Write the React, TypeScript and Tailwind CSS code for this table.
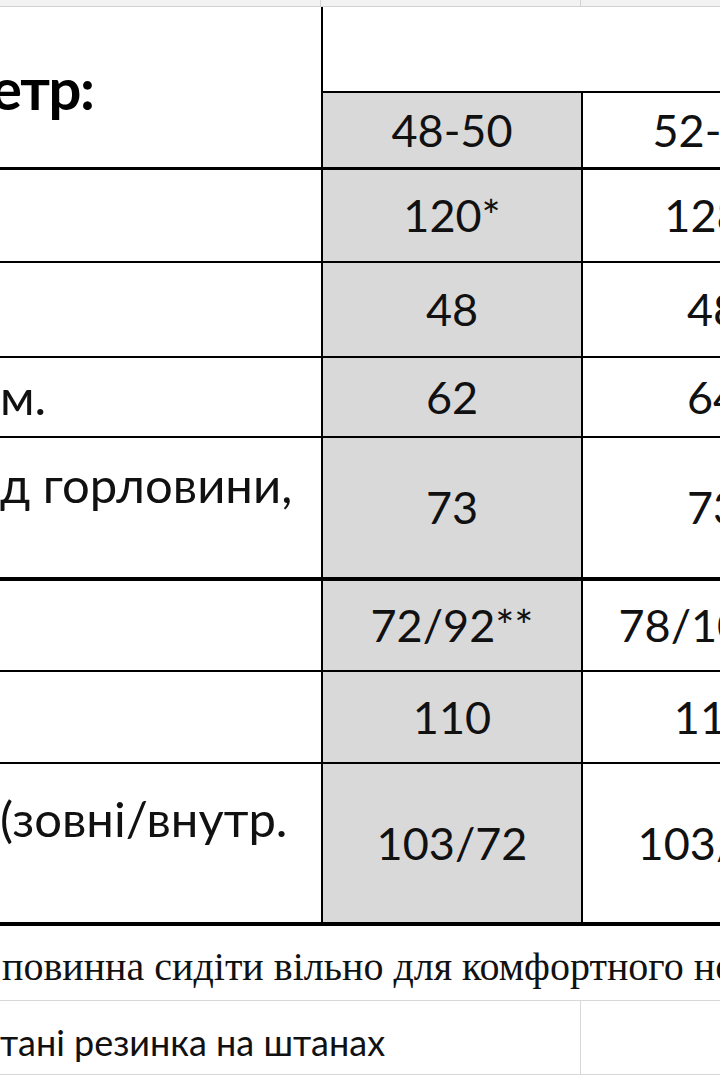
const calibri = "font-['Lato','Open_Sans',sans-serif]";

type Row = {
  label?: string;
  a: string;
  b: string;
  height: string;
  border: string;
  labelTop?: string;
};

const rows: Row[] = [
  { a: "120*", b: "128*", height: "h-[91px]", border: "border-b-2" },
  { a: "48", b: "48", height: "h-[93px]", border: "border-b-2" },
  { label: "м.", a: "62", b: "64", height: "h-[78px]", border: "border-b-2", labelTop: "pt-[10px]" },
  { label: "д горловини,", a: "73", b: "73", height: "h-[139px]", border: "border-b-4", labelTop: "pt-[18px]" },
  { a: "72/92**", b: "78/100**", height: "h-[89px]", border: "border-b-2" },
  { a: "110", b: "116", height: "h-[90px]", border: "border-b-2" },
  { label: "(зовні/внутр.", a: "103/72", b: "103/72", height: "h-[158px]", border: "border-b-4", labelTop: "pt-[26px]" },
];

function DataRow({ row }: { row: Row }) {
  return (
    <div className={`flex ${row.height} box-content border-black ${row.border}`}>
      <div
        className={`flex w-[321px] shrink-0 ${row.labelTop ? "items-start " + row.labelTop : "items-center"} border-r-2 border-black box-content`}
      >
        <span className="whitespace-nowrap text-[49px] leading-[56px] text-[#111]">{row.label}</span>
      </div>
      <div className="flex w-[258px] shrink-0 items-center justify-center bg-[#d9d9d9] border-r-2 border-black box-content">
        <span className="whitespace-nowrap text-[45px] leading-[53px] text-[#111]">{row.a}</span>
      </div>
      <div className="flex w-[260px] shrink-0 items-center justify-center">
        <span className="whitespace-nowrap text-[45px] leading-[53px] text-[#111]">{row.b}</span>
      </div>
    </div>
  );
}

export default function App() {
  return (
    <div className={`relative h-[1080px] w-[720px] overflow-hidden bg-white ${calibri}`}>
      <div className="flex w-[900px]">
        {/* spreadsheet column header strip */}
        <div className="flex h-[7px] w-full border-b border-[#d2d2d2] bg-[#f2f2f2]">
          <div className="w-[321px] shrink-0 border-r border-[#d2d2d2]" />
          <div className="w-[260px] shrink-0 border-r border-[#d2d2d2]" />
        </div>
      </div>

      <div className="w-[900px]">
        {/* header block */}
        <div className="flex h-[160px] box-content border-b-[3px] border-black">
          <div className="flex w-[321px] shrink-0 items-start overflow-hidden border-r-2 border-black box-content pt-[46px]">
            <span className="-ml-[9px] whitespace-nowrap text-[58px] font-bold leading-[70px] tracking-[-1.5px] text-black">
              етр:
            </span>
          </div>
          <div className="flex flex-col">
            <div className="h-[84px] w-[520px] box-content border-b-2 border-black" />
            <div className="flex h-[74px]">
              <div className="flex w-[258px] shrink-0 items-center justify-center bg-[#d9d9d9] border-r-2 border-black box-content">
                <span className="text-[45px] leading-[53px] text-[#111]">48-50</span>
              </div>
              <div className="flex w-[260px] shrink-0 items-center justify-center">
                <span className="text-[45px] leading-[53px] text-[#111]">52-54</span>
              </div>
            </div>
          </div>
        </div>

        {rows.map((row, i) => (
          <DataRow key={i} row={row} />
        ))}

        {/* notes below the table */}
        <div className="flex h-[75px] items-center border-b border-[#d8d8d8] pt-[8px]">
          <span className="whitespace-nowrap pl-[2px] font-['Liberation_Serif',serif] text-[40px] text-[#111]">
            повинна сидіти вільно для комфортного носіння
          </span>
        </div>
        <div className="flex h-[74px] border-b border-[#d8d8d8]">
          <div className="flex w-[581px] shrink-0 items-center border-r border-[#d8d8d8] pt-[8px]">
            <span className="whitespace-nowrap text-[36px] text-[#111]">тані резинка на штанах</span>
          </div>
        </div>
      </div>
    </div>
  );
}
